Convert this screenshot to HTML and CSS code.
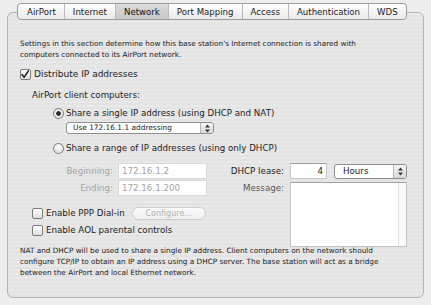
FILE: index.html
```html
<!DOCTYPE html>
<html lang="en">
<head>
    <meta charset="UTF-8" />
    <title>AirPort Network</title>
    <link rel="stylesheet" href="styles.css">
</head>
<body>

<div class="window">
    <nav class="tabs">
        <span class="tab">AirPort</span>
        <span class="tab">Internet</span>
        <span class="tab tab-active">Network</span>
        <span class="tab">Port Mapping</span>
        <span class="tab">Access</span>
        <span class="tab">Authentication</span>
        <span class="tab">WDS</span>
    </nav>

    <div class="panel">
        <p class="note">Settings in this section determine how this base station's Internet connection is shared with<br>computers connected to its AirPort network.</p>

        <label class="check-row distribute">
            <span class="box">
                <svg width="11" height="11" viewBox="0 0 11 11"><path d="M2.3 5.6 L4.6 8.4 L9.2 1.6" fill="none" stroke="#1e1e1e" stroke-width="1.7" stroke-linecap="round" stroke-linejoin="round"/></svg>
            </span>
            Distribute IP addresses
        </label>

        <div class="clients">
            <div class="caption">AirPort client computers:</div>

            <label class="radio-row first">
                <span class="radio radio-on"></span>
                Share a single IP address (using DHCP and NAT)
            </label>

            <div class="popup popup-addr">
                <span class="popup-text">Use 172.16.1.1 addressing</span>
                <span class="popup-arrows">
                    <svg width="7" height="9" viewBox="0 0 7 9"><path d="M3.5 0.5 L6 3.5 L1 3.5 Z M3.5 8.5 L6 5.5 L1 5.5 Z" fill="#333"/></svg>
                </span>
            </div>

            <label class="radio-row second">
                <span class="radio"></span>
                Share a range of IP addresses (using only DHCP)
            </label>

            <div class="range">
                <div class="range-left">
                    <div class="field-row">
                        <span class="lbl lbl-left dim">Beginning:</span>
                        <span class="field field-ip dim">172.16.1.2</span>
                    </div>
                    <div class="field-row row-gap">
                        <span class="lbl lbl-left dim">Ending:</span>
                        <span class="field field-ip dim">172.16.1.200</span>
                    </div>

                    <div class="check-row ppp">
                        <span class="box"></span>
                        Enable PPP Dial-in
                        <span class="btn-disabled">Configure...</span>
                    </div>
                    <div class="check-row aol">
                        <span class="box"></span>
                        Enable AOL parental controls
                    </div>
                </div>

                <div class="range-right">
                    <div class="field-row">
                        <span class="lbl lbl-right">DHCP lease:</span>
                        <span class="field field-lease">4</span>
                        <div class="popup popup-hours">
                            <span class="popup-text">Hours</span>
                            <span class="popup-arrows">
                                <svg width="7" height="9" viewBox="0 0 7 9"><path d="M3.5 0.5 L6 3.5 L1 3.5 Z M3.5 8.5 L6 5.5 L1 5.5 Z" fill="#333"/></svg>
                            </span>
                        </div>
                    </div>
                    <div class="field-row message-row">
                        <span class="lbl lbl-right lbl-msg">Message:</span>
                        <div class="message">
                            <span class="message-scroll"></span>
                        </div>
                    </div>
                </div>
            </div>
        </div>

        <p class="note bottom-note">NAT and DHCP will be used to share a single IP address. Client computers on the network should<br>configure TCP/IP to obtain an IP address using a DHCP server. The base station will act as a bridge<br>between the AirPort and local Ethernet network.</p>
    </div>
</div>

</body>
</html>
```

FILE: styles.css
```css
* {
    box-sizing: border-box;
}

body {
    margin: 0;
    background-color: #ededed;
    font-family: 'DejaVu Sans', 'Lucida Grande', sans-serif;
    font-size: 8.7px;
    color: #1c1c1c;
}

.window {
    padding: 3px 7px 0 7px;
}

/* tab strip */

.tabs {
    position: relative;
    z-index: 1;
    display: flex;
    width: fit-content;
    height: 17px;
    margin-left: 10px;
    border: 1px solid #9c9c9c;
    border-radius: 4px;
    background: linear-gradient(#ffffff, #f3f3f3 50%, #e9e9e9);
    overflow: hidden;
}

.tab {
    display: flex;
    align-items: center;
    padding: 0 8px;
    font-size: 8.6px;
    color: #222;
    border-left: 1px solid #b9b9b9;
}

.tab:first-child {
    border-left: none;
    padding-left: 9px;
}

.tab-active {
    background: linear-gradient(#dcdcdc, #d0d0d0 50%, #c8c8c8);
    color: #111;
}

/* panel */

.panel {
    height: 286px;
    margin-top: -8px;
    padding: 25px 12px 0 12px;
    border: 1px solid #b4b4b4;
    border-radius: 6px;
    background: repeating-linear-gradient(#e8e8e8 0, #e8e8e8 2px, #e3e3e3 2px, #e3e3e3 4px);
}

.note {
    margin: 0;
    font-size: 7.3px;
    line-height: 11px;
    color: #222;
}

.check-row {
    display: flex;
    align-items: center;
    height: 12px;
    line-height: 12px;
}

.box {
    width: 11px;
    height: 11px;
    margin-right: 3px;
    border: 1px solid #7c7c7c;
    border-radius: 2px;
    background: linear-gradient(#ffffff, #ececec 60%, #e0e0e0);
    display: flex;
}

.box svg {
    margin: -1px 0 0 -1px;
}

.distribute {
    margin-top: 8px;
    font-size: 9px;
}

.clients {
    padding-left: 12px;
}

.caption {
    margin-top: 9px;
    height: 12px;
    line-height: 12px;
}

.radio-row {
    display: flex;
    align-items: center;
    height: 12px;
    margin-left: 21px;
}

.radio-row.first {
    margin-top: 6px;
}

.radio-row.second {
    margin-top: 8px;
}

.radio {
    width: 11px;
    height: 11px;
    margin-right: 2px;
    border: 1px solid #7c7c7c;
    border-radius: 50%;
    background: radial-gradient(circle at 50% 30%, #ffffff, #e4e4e4 70%);
}

.radio-on {
    background: radial-gradient(circle, #222 0, #333 2px, #f2f2f2 2.6px, #dedede 70%);
}

/* popup menus */

.popup {
    display: flex;
    height: 12px;
    border: 1px solid #8e8e8e;
    border-radius: 3px;
    background: #ffffff;
    overflow: hidden;
}

.popup-addr {
    width: 148px;
    margin: 3px 0 0 34px;
}

.popup-text {
    flex: 1;
    padding-left: 6px;
    line-height: 10px;
    font-size: 7.4px;
}

.popup-arrows {
    width: 13px;
    display: flex;
    align-items: center;
    justify-content: center;
    border-left: 1px solid #b6b6b6;
    background: linear-gradient(#f5f5f5, #d8d8d8);
}

.popup-hours {
    width: 73px;
    height: 15px;
    margin-left: 7px;
}

.popup-hours .popup-text {
    font-size: 8.7px;
    line-height: 13px;
    padding-left: 8px;
}

/* address range */

.range {
    display: flex;
    margin-top: 9px;
}

.range-left {
    width: 183px;
}

.field-row {
    display: flex;
    align-items: center;
    height: 16px;
}

.row-gap {
    margin-top: 1px;
}

.lbl {
    text-align: right;
}

.lbl-left {
    width: 81px;
    margin-right: 5px;
}

.lbl-right {
    width: 67px;
    margin-right: 6px;
}

.dim {
    color: #a3a3a3;
}

.field {
    height: 16px;
    line-height: 15px;
    background: #ffffff;
    border: 1px solid #c9c9c9;
    border-top-color: #9e9e9e;
    padding: 0 3px;
}

.field-ip {
    width: 89px;
}

.field-ip.dim {
    border-color: #dadada;
}

.field-lease {
    width: 37px;
    text-align: right;
}

.ppp {
    margin-top: 11px;
}

.aol {
    margin-top: 5px;
}

.btn-disabled {
    margin-left: 7px;
    width: 74px;
    height: 13px;
    line-height: 11px;
    text-align: center;
    font-size: 8px;
    color: #b2b2b2;
    border: 1px solid #cdcdcd;
    border-radius: 7px;
    background: linear-gradient(#fbfbfb, #eeeeee);
}

.range-right {
    padding-left: 2px;
}

.message-row {
    align-items: flex-start;
    height: auto;
    margin-top: 3px;
}

.lbl-msg {
    line-height: 12px;
    color: #555;
}

.message {
    display: flex;
    justify-content: flex-end;
    width: 117px;
    height: 65px;
    background: #ffffff;
    border: 1px solid #c4c4c4;
    border-top-color: #a0a0a0;
}

.message-scroll {
    width: 8px;
    border-left: 1px solid #e2e2e2;
    background: #fafafa;
}

.bottom-note {
    margin-top: -2px;
}
```
